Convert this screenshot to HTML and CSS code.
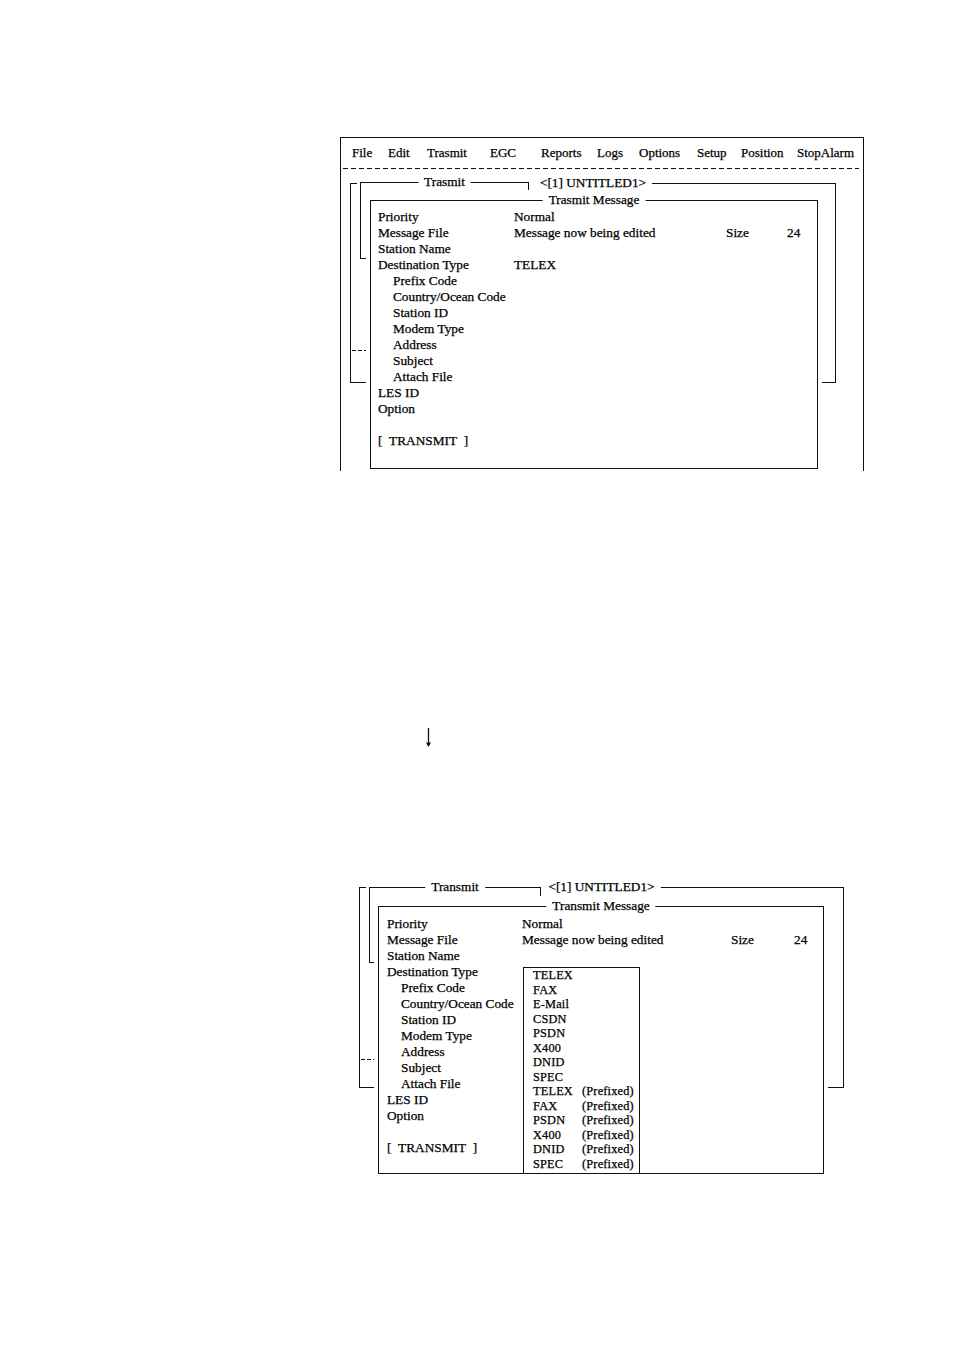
FILE: index.html
```html
<!DOCTYPE html>
<html>
<head>
<meta charset="utf-8">
<title>Transmit Message</title>
<link rel="stylesheet" href="styles.css">
</head>
<body>
<div class="page">

  <div class="fig1">
    <div class="menubar">
      <span>File</span><span>Edit</span><span>Trasmit</span><span>EGC</span><span>Reports</span><span>Logs</span><span>Options</span><span>Setup</span><span>Position</span><span>StopAlarm</span>
    </div>
    <div class="dashline"></div>

    <div class="win doc doc1">
      <span class="title">&lt;[1] UNTITLED1&gt;</span>
      <div class="sep sep1"></div>
    </div>
    <div class="win menu menu1">
      <span class="title">Trasmit</span>
    </div>
    <div class="win inner inner1">
      <span class="title">Trasmit Message</span>
      <div class="form form1">
        <div class="row"><span>Priority</span><span>Normal</span></div>
        <div class="row"><span>Message File</span><span>Message now being edited</span><span>Size</span><span>24</span></div>
        <div class="row"><span>Station Name</span></div>
        <div class="row"><span>Destination Type</span><span>TELEX</span></div>
        <div class="row"><span class="ind">Prefix Code</span></div>
        <div class="row"><span class="ind">Country/Ocean Code</span></div>
        <div class="row"><span class="ind">Station ID</span></div>
        <div class="row"><span class="ind">Modem Type</span></div>
        <div class="row"><span class="ind">Address</span></div>
        <div class="row"><span class="ind">Subject</span></div>
        <div class="row"><span class="ind">Attach File</span></div>
        <div class="row"><span>LES ID</span></div>
        <div class="row"><span>Option</span></div>
        <div class="row"></div>
        <div class="row"><span class="btn">[&nbsp;&nbsp;TRANSMIT&nbsp;&nbsp;]</span></div>
      </div>
    </div>
  </div>

  <div class="arrow">
    <svg width="9" height="19" viewBox="0 0 9 19">
      <line x1="4.5" y1="0" x2="4.5" y2="17" stroke="#111" stroke-width="1.3"/>
      <path d="M2 14.5 L7 14.5 L4.5 19 Z" fill="#111"/>
    </svg>
  </div>

  <div class="fig2">
    <div class="win doc doc2">
      <span class="title">&lt;[1] UNTITLED1&gt;</span>
      <div class="sep sep2"></div>
    </div>
    <div class="win menu menu2">
      <span class="title">Transmit</span>
    </div>
    <div class="win inner inner2">
      <span class="title">Transmit Message</span>
      <div class="form form2">
        <div class="row"><span>Priority</span><span>Normal</span></div>
        <div class="row"><span>Message File</span><span>Message now being edited</span><span>Size</span><span>24</span></div>
        <div class="row"><span>Station Name</span></div>
        <div class="row"><span>Destination Type</span></div>
        <div class="row"><span class="ind">Prefix Code</span></div>
        <div class="row"><span class="ind">Country/Ocean Code</span></div>
        <div class="row"><span class="ind">Station ID</span></div>
        <div class="row"><span class="ind">Modem Type</span></div>
        <div class="row"><span class="ind">Address</span></div>
        <div class="row"><span class="ind">Subject</span></div>
        <div class="row"><span class="ind">Attach File</span></div>
        <div class="row"><span>LES ID</span></div>
        <div class="row"><span>Option</span></div>
        <div class="row"></div>
        <div class="row"><span class="btn">[&nbsp;&nbsp;TRANSMIT&nbsp;&nbsp;]</span></div>
      </div>
      <div class="dropdown">
        <div class="opt"><span>TELEX</span></div>
        <div class="opt"><span>FAX</span></div>
        <div class="opt"><span>E-Mail</span></div>
        <div class="opt"><span>CSDN</span></div>
        <div class="opt"><span>PSDN</span></div>
        <div class="opt"><span>X400</span></div>
        <div class="opt"><span>DNID</span></div>
        <div class="opt"><span>SPEC</span></div>
        <div class="opt"><span>TELEX</span><span>(Prefixed)</span></div>
        <div class="opt"><span>FAX</span><span>(Prefixed)</span></div>
        <div class="opt"><span>PSDN</span><span>(Prefixed)</span></div>
        <div class="opt"><span>X400</span><span>(Prefixed)</span></div>
        <div class="opt"><span>DNID</span><span>(Prefixed)</span></div>
        <div class="opt"><span>SPEC</span><span>(Prefixed)</span></div>
      </div>
    </div>
  </div>

</div>
</body>
</html>
```

FILE: styles.css
```css
html, body {
  margin: 0;
  padding: 0;
  background: #fff;
}

body {
  font-family: "Liberation Serif", "Times New Roman", serif;
  font-size: 13.3px;
  color: #000;
  -webkit-text-stroke: 0.25px #000;
}

.page {
  width: 954px;
  height: 1351px;
  overflow: hidden;
  padding-top: 137px;
  box-sizing: border-box;
}

/* ---------- first screen ---------- */
.fig1 {
  position: relative;
  margin-left: 340px;
  width: 524px;
  height: 334px;
  border: 1px solid #111;
  border-bottom: none;
  box-sizing: border-box;
}

.menubar {
  display: grid;
  grid-template-columns: 36px 39px 63px 51px 56px 42px 58px 44px 56px auto;
  padding: 7px 0 0 11px;
  height: 16px;
  line-height: 16px;
  font-size: 13px;
  white-space: nowrap;
}

.dashline {
  margin: 7px 4px 0 2px;
  height: 1px;
  background: repeating-linear-gradient(90deg, #111 0 5px, transparent 5px 8px);
}

/* ---------- windows ---------- */
.win {
  position: absolute;
  border: 1px solid #111;
  background: #fff;
  box-sizing: border-box;
}

.title {
  position: absolute;
  z-index: 1;
  top: -9px;
  left: 50%;
  transform: translateX(-50%);
  background: #fff;
  padding: 0 6px;
  line-height: 16px;
  white-space: nowrap;
}

.menu {
  border-bottom: 1px solid #111;
  box-shadow: 0 0 0 3px #fff, 7px 0 0 3px #fff;
}

.inner {
  box-shadow: 0 -6px 0 4px #fff;
}

.sep {
  height: 1px;
  width: 20px;
  background: repeating-linear-gradient(90deg, #111 0 4px, transparent 4px 6px);
}

.doc1 { left: 9px; top: 45px; width: 486px; height: 200px; }
.menu1 { left: 19px; top: 44px; width: 169px; height: 77px; }
.inner1 { left: 29px; top: 62px; width: 448px; height: 269px; }
.sep1 { margin-top: 166px; margin-left: 1px; }

/* ---------- form rows ---------- */
.form {
  white-space: nowrap;
}

.row {
  display: grid;
  height: 16px;
  line-height: 16px;
}

.form1 { padding: 8px 0 0 7px; }
.form1 .row { grid-template-columns: 136px 212px 61px auto; }

.form2 { padding: 9px 0 0 8px; }
.form2 .row { grid-template-columns: 135px 209px 63px auto; }

.ind { padding-left: 15px; }
.form2 .ind { padding-left: 14px; }

/* ---------- arrow ---------- */
.arrow {
  margin: 257px 0 0 424px;
  height: 19px;
}
.arrow svg { display: block; }

/* ---------- second screen ---------- */
.fig2 {
  position: relative;
  margin: 140px 0 0 359px;
  width: 485px;
  height: 287px;
}

.doc2 { left: 0; top: 0; width: 485px; height: 201px; }
.menu2 { left: 10px; top: 0; width: 172px; height: 76px; }
.inner2 { left: 19px; top: 19px; width: 446px; height: 268px; }
.sep2 { margin-top: 171px; margin-left: 1px; }

.dropdown {
  position: absolute;
  left: 144px;
  top: 60px;
  width: 117px;
  height: 207px;
  border: 1px solid #111;
  background: #fff;
  box-sizing: border-box;
  padding: 0 0 0 9px;
  font-size: 12.3px;
  letter-spacing: 0.2px;
}

.opt {
  display: grid;
  grid-template-columns: 49px auto;
  height: 14.5px;
  line-height: 14.5px;
  white-space: nowrap;
}
```
